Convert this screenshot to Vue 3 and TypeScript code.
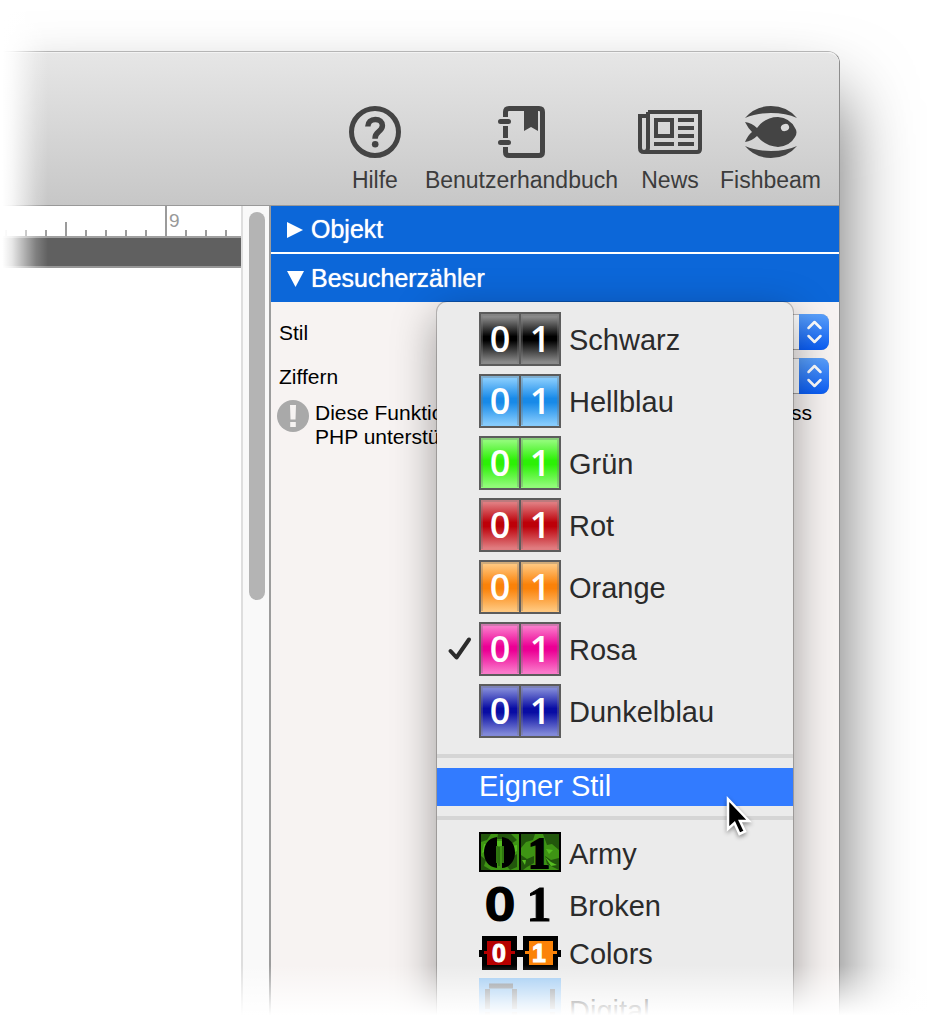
<script setup lang="ts">
import { ref } from 'vue'

interface CounterStyle {
  name: string
  light: string
  dark: string
}

const counterStyles: CounterStyle[] = [
  { name: 'Schwarz', light: '#8a8a8a', dark: '#000000' },
  { name: 'Hellblau', light: '#85cbfd', dark: '#188ae8' },
  { name: 'Grün', light: '#90fb78', dark: '#2cf006' },
  { name: 'Rot', light: '#e07c80', dark: '#bd0009' },
  { name: 'Orange', light: '#ffc67c', dark: '#fb8209' },
  { name: 'Rosa', light: '#fa78ca', dark: '#ec0095' },
  { name: 'Dunkelblau', light: '#8088d8', dark: '#080ca4' },
]

const selected = ref('Rosa')
const ticks = ['minor', 'minor', 'minor', 'half', 'minor', 'minor', 'minor', 'minor', 'major', 'minor', 'minor', 'minor']
</script>

<template>
  <div class="page">
    <main class="window">
      <header class="toolbar">
        <button class="tool" type="button">
          <svg width="52" height="52" viewBox="0 0 52 52" aria-hidden="true">
            <circle cx="26" cy="26" r="23.5" fill="none" stroke="#444" stroke-width="5" />
            <path d="M18.8 20.5C19 16 22 13.5 26.3 13.5C30.5 13.5 33.4 16 33.4 19.6C33.4 22.4 32 23.9 29.6 25.7C27 27.7 26 29 26 32.8" fill="none" stroke="#444" stroke-width="5.5" />
            <circle cx="26.2" cy="38.2" r="3.3" fill="#444" />
          </svg>
          <span>Hilfe</span>
        </button>
        <button class="tool wide" type="button">
          <svg width="48" height="52" viewBox="0 0 48 52" aria-hidden="true">
            <path d="M8.500 11V6Q8.500 2.500 12 2.500H42Q45.500 2.500 45.500 6V46Q45.500 49.500 42 49.500H12Q8.500 49.500 8.500 46V41M8.500 32V20" fill="none" stroke="#444" stroke-width="5" />
            <path d="M3.500 15.500H11.500M3.500 36.500H11.500" stroke="#444" stroke-width="5" stroke-linecap="round" />
            <path d="M27 2H41V25L34 21L27 25Z" fill="#444" />
          </svg>
          <span>Benutzerhandbuch</span>
        </button>
        <button class="tool" type="button">
          <svg width="64" height="52" viewBox="0 0 64 52" aria-hidden="true">
            <path d="M10 6H62V43Q62 46 59 46H6Q2 46 2 42V10H10V42Q10 46 6 46" fill="none" stroke="#444" stroke-width="4" />
            <path d="M10 6V12" stroke="#444" stroke-width="4" />
            <rect x="18" y="14" width="16" height="16" fill="none" stroke="#444" stroke-width="4" />
            <path d="M40 14H56M40 22H56M40 30H56M40 38H56M16 38H36" stroke="#444" stroke-width="4" />
          </svg>
          <span>News</span>
        </button>
        <button class="tool" type="button">
          <svg width="52" height="52" viewBox="0 0 52 52" aria-hidden="true">
            <path d="M0 12Q10 0 26 0T52 12Q41 7 26 7T0 12ZM0 40Q10 52 26 52T52 40Q41 45 26 45T0 40Z" fill="#444" />
            <path d="M0 16Q7 17 12 22Q20 11 33 11Q45 12 50 22Q53 26 50 31Q45 40 33 41Q20 40 12 30Q7 35 0 36Q3 29 7 26Q3 22 0 16Z" fill="#444" />
            <ellipse cx="40" cy="21.500" rx="4.200" ry="3.500" transform="rotate(-20 40 21.500)" fill="#dadada" />
          </svg>
          <span>Fishbeam</span>
        </button>
      </header>

      <div class="workspace">
        <section class="canvas">
          <div class="ruler">
            <div class="ticks">
              <span v-for="(tick, i) in ticks" :key="i" class="cell">
                <i :class="['tick', tick]"></i>
                <b v-if="tick === 'major'" class="number">9</b>
              </span>
            </div>
          </div>
          <div class="band"></div>
        </section>

        <div class="scrollbar"><div class="thumb"></div></div>

        <aside class="inspector">
          <button class="section objekt" type="button">
            <svg width="18" height="18" viewBox="0 0 18 18" aria-hidden="true"><path d="M0 1L16 9L0 17Z" fill="#fff" /></svg>
            Objekt
          </button>
          <button class="section counter" type="button">
            <svg width="18" height="18" viewBox="0 0 18 18" aria-hidden="true"><path d="M0 1H17L8.500 17Z" fill="#fff" /></svg>
            Besucherzähler
          </button>

          <div class="form">
            <div class="field">
              <label for="stil">Stil</label>
              <span class="picker">
                <select id="stil" v-model="selected">
                  <option v-for="s in counterStyles" :key="s.name">{{ s.name }}</option>
                </select>
                <span class="cap">
                  <svg width="30" height="36" viewBox="0 0 30 36" aria-hidden="true"><path d="M9.500 14L15.500 8L21.500 14M9.500 22L15.500 28L21.500 22" fill="none" stroke="#fff" stroke-width="2.500" stroke-linecap="round" stroke-linejoin="round" /></svg>
                </span>
              </span>
            </div>
            <div class="field">
              <label for="ziffern">Ziffern</label>
              <span class="picker">
                <select id="ziffern"></select>
                <span class="cap">
                  <svg width="30" height="36" viewBox="0 0 30 36" aria-hidden="true"><path d="M9.500 14L15.500 8L21.500 14M9.500 22L15.500 28L21.500 22" fill="none" stroke="#fff" stroke-width="2.500" stroke-linecap="round" stroke-linejoin="round" /></svg>
                </span>
              </span>
            </div>
            <div class="note">
              <svg width="32" height="32" viewBox="0 0 32 32" aria-hidden="true">
                <circle cx="16" cy="16" r="16" fill="#a9a9a9" />
                <path d="M13 5H19L18.500 19.500H13.500ZM13.200 22H18.800V27H13.200Z" fill="#f6f3f2" />
              </svg>
              <p>
                <span class="line"><span>Diese Funktio</span><span>ss</span></span>
                <span class="line">PHP unterstü</span>
              </p>
            </div>
          </div>

          <div class="menu" role="menu">
            <button
              v-for="(s, i) in counterStyles"
              :key="s.name"
              class="item tall"
              type="button"
              role="menuitemradio"
              :aria-checked="selected === s.name"
              @click="selected = s.name"
            >
              <span class="mark">
                <svg v-if="selected === s.name" width="24" height="24" viewBox="0 0 24 24" aria-hidden="true"><path d="M2.500 14L8.500 20.500L21 2.500" fill="none" stroke="#2b2b2b" stroke-width="4" stroke-linecap="round" stroke-linejoin="round" /></svg>
              </span>
              <svg class="preview" width="82" height="54" viewBox="0 0 82 54">
                <defs>
                  <linearGradient :id="'shade' + i" x1="0" y1="0" x2="0" y2="1">
                    <stop offset="0.06" :stop-color="s.light" />
                    <stop offset="0.45" :stop-color="s.dark" />
                    <stop offset="0.53" :stop-color="s.dark" />
                    <stop offset="0.96" :stop-color="s.light" />
                  </linearGradient>
                </defs>
                <rect width="82" height="54" fill="#5c5c5c" />
                <rect x="2" y="2" width="38" height="50" :fill="`url(#shade${i})`" />
                <rect x="42" y="2" width="38" height="50" :fill="`url(#shade${i})`" />
                <path d="M3 51V3H39V51M43 51V3H79V51" fill="none" stroke="#777" stroke-opacity="0.35" stroke-width="2" />
                <text class="digit" x="21" y="40">0</text>
                <text class="digit" x="61" y="40">1</text>
              </svg>
              <span class="name">{{ s.name }}</span>
            </button>

            <hr />
            <button class="item own" type="button" role="menuitem">
              <span class="mark"></span>Eigner Stil
              <svg class="pointer" width="28" height="44" viewBox="0 0 28 44" aria-hidden="true">
                <path d="M2 2V32L8.500 26L13.500 37L19 34.500L14 24H23Z" fill="#000" stroke="#fff" stroke-width="2.500" />
              </svg>
            </button>
            <hr />

            <button class="item army" type="button" role="menuitem">
              <span class="mark"></span>
              <svg class="preview" width="82" height="40" viewBox="0 0 82 40">
                <rect width="82" height="40" fill="#000" />
                <path d="M2 2H40V38H2ZM42 2H80V38H42Z" fill="#3e9414" />
                <path d="M2 2H12L8 8L2 10ZM19 2H32L38 8L32 12L26 7H18ZM2 24L7 28L5 34L12 38H2ZM32 26L38 22V35L31 38L27 33ZM42 2H56L54 8L47 10L42 16ZM64 2H80V18L73 12L68 13ZM42 23L48 27L55 24V31L48 35L44 38H42ZM66 24L72 28L80 26V38L68 32Z" fill="#22570c" />
                <path d="M5 12H9L7 19L3 21ZM33 14L38 13V19L34 21ZM43 28H47L46 33ZM67 17L74 18L70 22ZM66 25L72 30L78 33L72 34Z" fill="#55bd20" />
                <path d="M18 5C9 6 5 13 5 20.500S9 35 18 36ZM23 5C32 6 36 13 36 20.500S32 35 23 36Z" fill="#000" />
                <path d="M17 14H19V31H17ZM23 14H25V31H23Z" fill="#2f7510" />
                <path d="M20 15V34" stroke="#1d4f0a" stroke-width="1" />
                <path d="M18 9H23V14H18Z" fill="#55bd20" />
                <text class="serif" x="60" y="36" font-size="44" stroke-width="2">1</text>
              </svg>
              <span class="name low">Army</span>
            </button>
            <button class="item broken" type="button" role="menuitem">
              <span class="mark"></span>
              <svg class="preview" width="82" height="48" viewBox="0 0 82 48">
                <text class="slab" x="21" y="41" font-size="46">0</text>
                <text class="serif" x="60" y="41" font-size="50" stroke-width="1">1</text>
              </svg>
              <span class="name low">Broken</span>
            </button>
            <button class="item colors" type="button" role="menuitem">
              <span class="mark"></span>
              <svg class="preview" width="82" height="34" viewBox="0 0 82 34">
                <path d="M3 0H38V14H44V0H79V14H82V21H79V34H44V21H38V34H3V21H0V14H3Z" fill="#000" />
                <path d="M8 5H32V15H36V18H32V29H8V18H5V15H8Z" fill="#b60000" />
                <path d="M50 5H74V15H78V18H74V29H50V18H46V15H50Z" fill="#fb8308" />
                <text class="block" x="20" y="26">0</text>
                <text class="block" x="60" y="26">1</text>
              </svg>
              <span class="name">Colors</span>
            </button>
            <button class="item digital" type="button" role="menuitem">
              <span class="mark"></span>
              <svg class="preview" width="82" height="64" viewBox="0 0 82 64">
                <rect width="82" height="64" fill="#9cc9f2" />
                <path d="M10 8H34M8.500 11V31M35.500 11V31M8.500 34V54M35.500 34V54M10 57H34M73.500 11V31M73.500 34V54" stroke="#888e94" stroke-width="5" />
              </svg>
              <span class="name">Digital</span>
            </button>
          </div>
        </aside>
      </div>
    </main>
    <div class="fade-left"></div>
    <div class="fade-bottom"></div>
  </div>
</template>

<style>
body {
  margin: 0;
  background: #fff;
}
</style>

<style scoped>
.page {
  position: relative;
  display: flex;
  height: 100vh;
  overflow: hidden;
  box-sizing: border-box;
  padding: 51px 95px 0 0;
  background: #fff;
  font-family: "Liberation Sans", Arial, sans-serif;
}
button {
  margin: 0;
  padding: 0;
  border: 0;
  background: none;
  font: inherit;
  color: inherit;
  text-align: left;
}
svg {
  display: block;
  flex: none;
  overflow: visible;
}
.window {
  flex: 1;
  display: flex;
  flex-direction: column;
  box-sizing: border-box;
  margin-bottom: -100px;
  border: 1px solid #8d8d8d;
  border-top-color: #b5b5b5;
  border-left: 0;
  border-radius: 0 12px 0 0;
  box-shadow: 0 46px 72px rgba(0, 0, 0, 0.6);
}
.toolbar {
  display: flex;
  justify-content: flex-end;
  align-items: flex-start;
  gap: 14px;
  box-sizing: border-box;
  height: 154px;
  padding: 54px 16px 0 0;
  border-top: 1px solid #f3f3f3;
  border-bottom: 1px solid #999;
  border-radius: 0 11px 0 0;
  background: linear-gradient(#e6e6e6, #c7c7c7);
}
.tool {
  display: flex;
  flex-direction: column;
  align-items: center;
  gap: 8px;
  min-width: 64px;
  padding: 0 2px;
  font-size: 23px;
  line-height: 28px;
  color: #3c3c3c;
}
.tool.wide {
  padding: 0 4px;
}
.tool svg {
  margin-top: -1px;
}
.workspace {
  flex: 1;
  display: flex;
}
.canvas {
  flex: 1;
  min-width: 0;
  background: #fff;
}
.ruler {
  height: 30px;
  border-bottom: 2px solid #a0a0a0;
  overflow: hidden;
}
.ticks {
  display: flex;
  justify-content: flex-end;
  height: 30px;
  margin-right: -4px;
}
.cell {
  display: flex;
  align-items: flex-end;
  flex: 0 0 20px;
}
.tick {
  width: 2px;
  height: 6px;
  background: #9b9b9b;
}
.tick.half {
  height: 14px;
}
.tick.major {
  height: 30px;
}
.number {
  align-self: center;
  margin-left: 2px;
  font-size: 19px;
  line-height: 20px;
  font-weight: 400;
  color: #999;
}
.band {
  height: 28px;
  border-bottom: 2px solid #979797;
  background: #606060;
}
.scrollbar {
  flex: 0 0 28px;
  padding: 6px 0 0 6px;
  box-sizing: border-box;
  border-left: 2px solid #dedede;
  background: #f9f9f9;
}
.thumb {
  width: 16px;
  height: 388px;
  border-radius: 8px;
  background: #b4b4b4;
}
.inspector {
  position: relative;
  flex: 0 0 568px;
  border-left: 2px solid #9c9c9c;
  background: #f7f3f2;
}
.section {
  display: flex;
  align-items: center;
  gap: 6px;
  box-sizing: border-box;
  width: 100%;
  padding: 1px 0 0 16px;
  background: #0c67d9;
  color: #fff;
  font-size: 25px;
  text-shadow: 0 0 1px #fff;
}
.objekt {
  height: 46px;
}
.counter {
  height: 48px;
  margin-top: 2px;
  box-shadow: 0 -2px #fff;
}
.form {
  padding: 12px 10px 0 8px;
  font-size: 21px;
  color: #000;
}
.field {
  display: flex;
  align-items: center;
  height: 36px;
  margin-bottom: 8px;
}
.field label {
  flex: 0 0 158px;
  padding-top: 2px;
}
.picker {
  position: relative;
  flex: 1;
}
.picker select {
  display: block;
  appearance: none;
  width: 100%;
  height: 36px;
  padding: 0 40px 0 12px;
  border: 1px solid #bdb9b8;
  border-bottom-color: #a5a2a1;
  border-radius: 8px;
  background: #fff;
  font: inherit;
}
.cap {
  position: absolute;
  top: 0;
  right: 0;
  border-radius: 0 8px 8px 0;
  background: linear-gradient(#5aa0fb, #0a5df5);
  pointer-events: none;
}
.note {
  display: flex;
  gap: 6px;
  margin: -2px 0 0 -2px;
  padding-right: 17px;
  line-height: 24px;
}
.note p {
  flex: 1;
  margin: 1px 0 0;
}
.line {
  display: flex;
  justify-content: space-between;
}
.menu {
  position: absolute;
  top: 96px;
  left: 166px;
  right: 46px;
  padding-top: 6px;
  border-radius: 10px;
  background: #ebebeb;
  box-shadow: 0 0 0 1px rgba(0, 0, 0, 0.22), 0 14px 44px rgba(0, 0, 0, 0.38);
  font-size: 29px;
  color: #2b2b2b;
}
.item {
  position: relative;
  display: flex;
  align-items: center;
  width: 100%;
  height: 62px;
}
.mark {
  flex: 0 0 31px;
  padding-left: 11px;
}
.preview {
  margin-right: 8px;
}
.name {
  padding-top: 2px;
}
.name.low {
  padding-top: 4px;
}
.menu hr {
  height: 4px;
  margin: 10px 0;
  border: 0;
  background: #d5d5d5;
}
.tall + hr {
  margin-top: 12px;
}
.own {
  height: 38px;
  padding-bottom: 2px;
  box-sizing: border-box;
  background: #327bff;
  color: #fff;
}
.own + hr {
  margin-bottom: 8px;
}
.army {
  height: 48px;
}
.broken {
  height: 56px;
}
.colors {
  height: 42px;
}
.digital {
  height: 72px;
}
.pointer {
  position: absolute;
  z-index: 1;
  top: 29px;
  right: 39px;
  filter: drop-shadow(0 2px 2px rgba(0, 0, 0, 0.4));
}
.digit {
  font: 600 36px "Open Sans", sans-serif;
  fill: #fff;
  text-anchor: middle;
}
.serif {
  font-family: "Liberation Serif", serif;
  font-weight: 700;
  text-anchor: middle;
  stroke: #000;
}
.slab {
  font-family: "DejaVu Sans", sans-serif;
  font-weight: 700;
  text-anchor: middle;
}
.block {
  font: 700 25px "Liberation Sans", sans-serif;
  fill: #fff;
  stroke: #fff;
  text-anchor: middle;
}
.fade-left {
  position: absolute;
  inset: 0 auto 0 0;
  width: 48px;
  background: linear-gradient(90deg, #fff 5%, rgba(255, 255, 255, 0.85) 25%, rgba(255, 255, 255, 0.2) 75%, transparent);
  pointer-events: none;
}
.fade-bottom {
  position: absolute;
  inset: auto 0 0 0;
  height: 52px;
  background: linear-gradient(transparent, rgba(255, 255, 255, 0.2) 20%, rgba(255, 255, 255, 0.8) 75%, #fff 97%);
  pointer-events: none;
}
</style>
